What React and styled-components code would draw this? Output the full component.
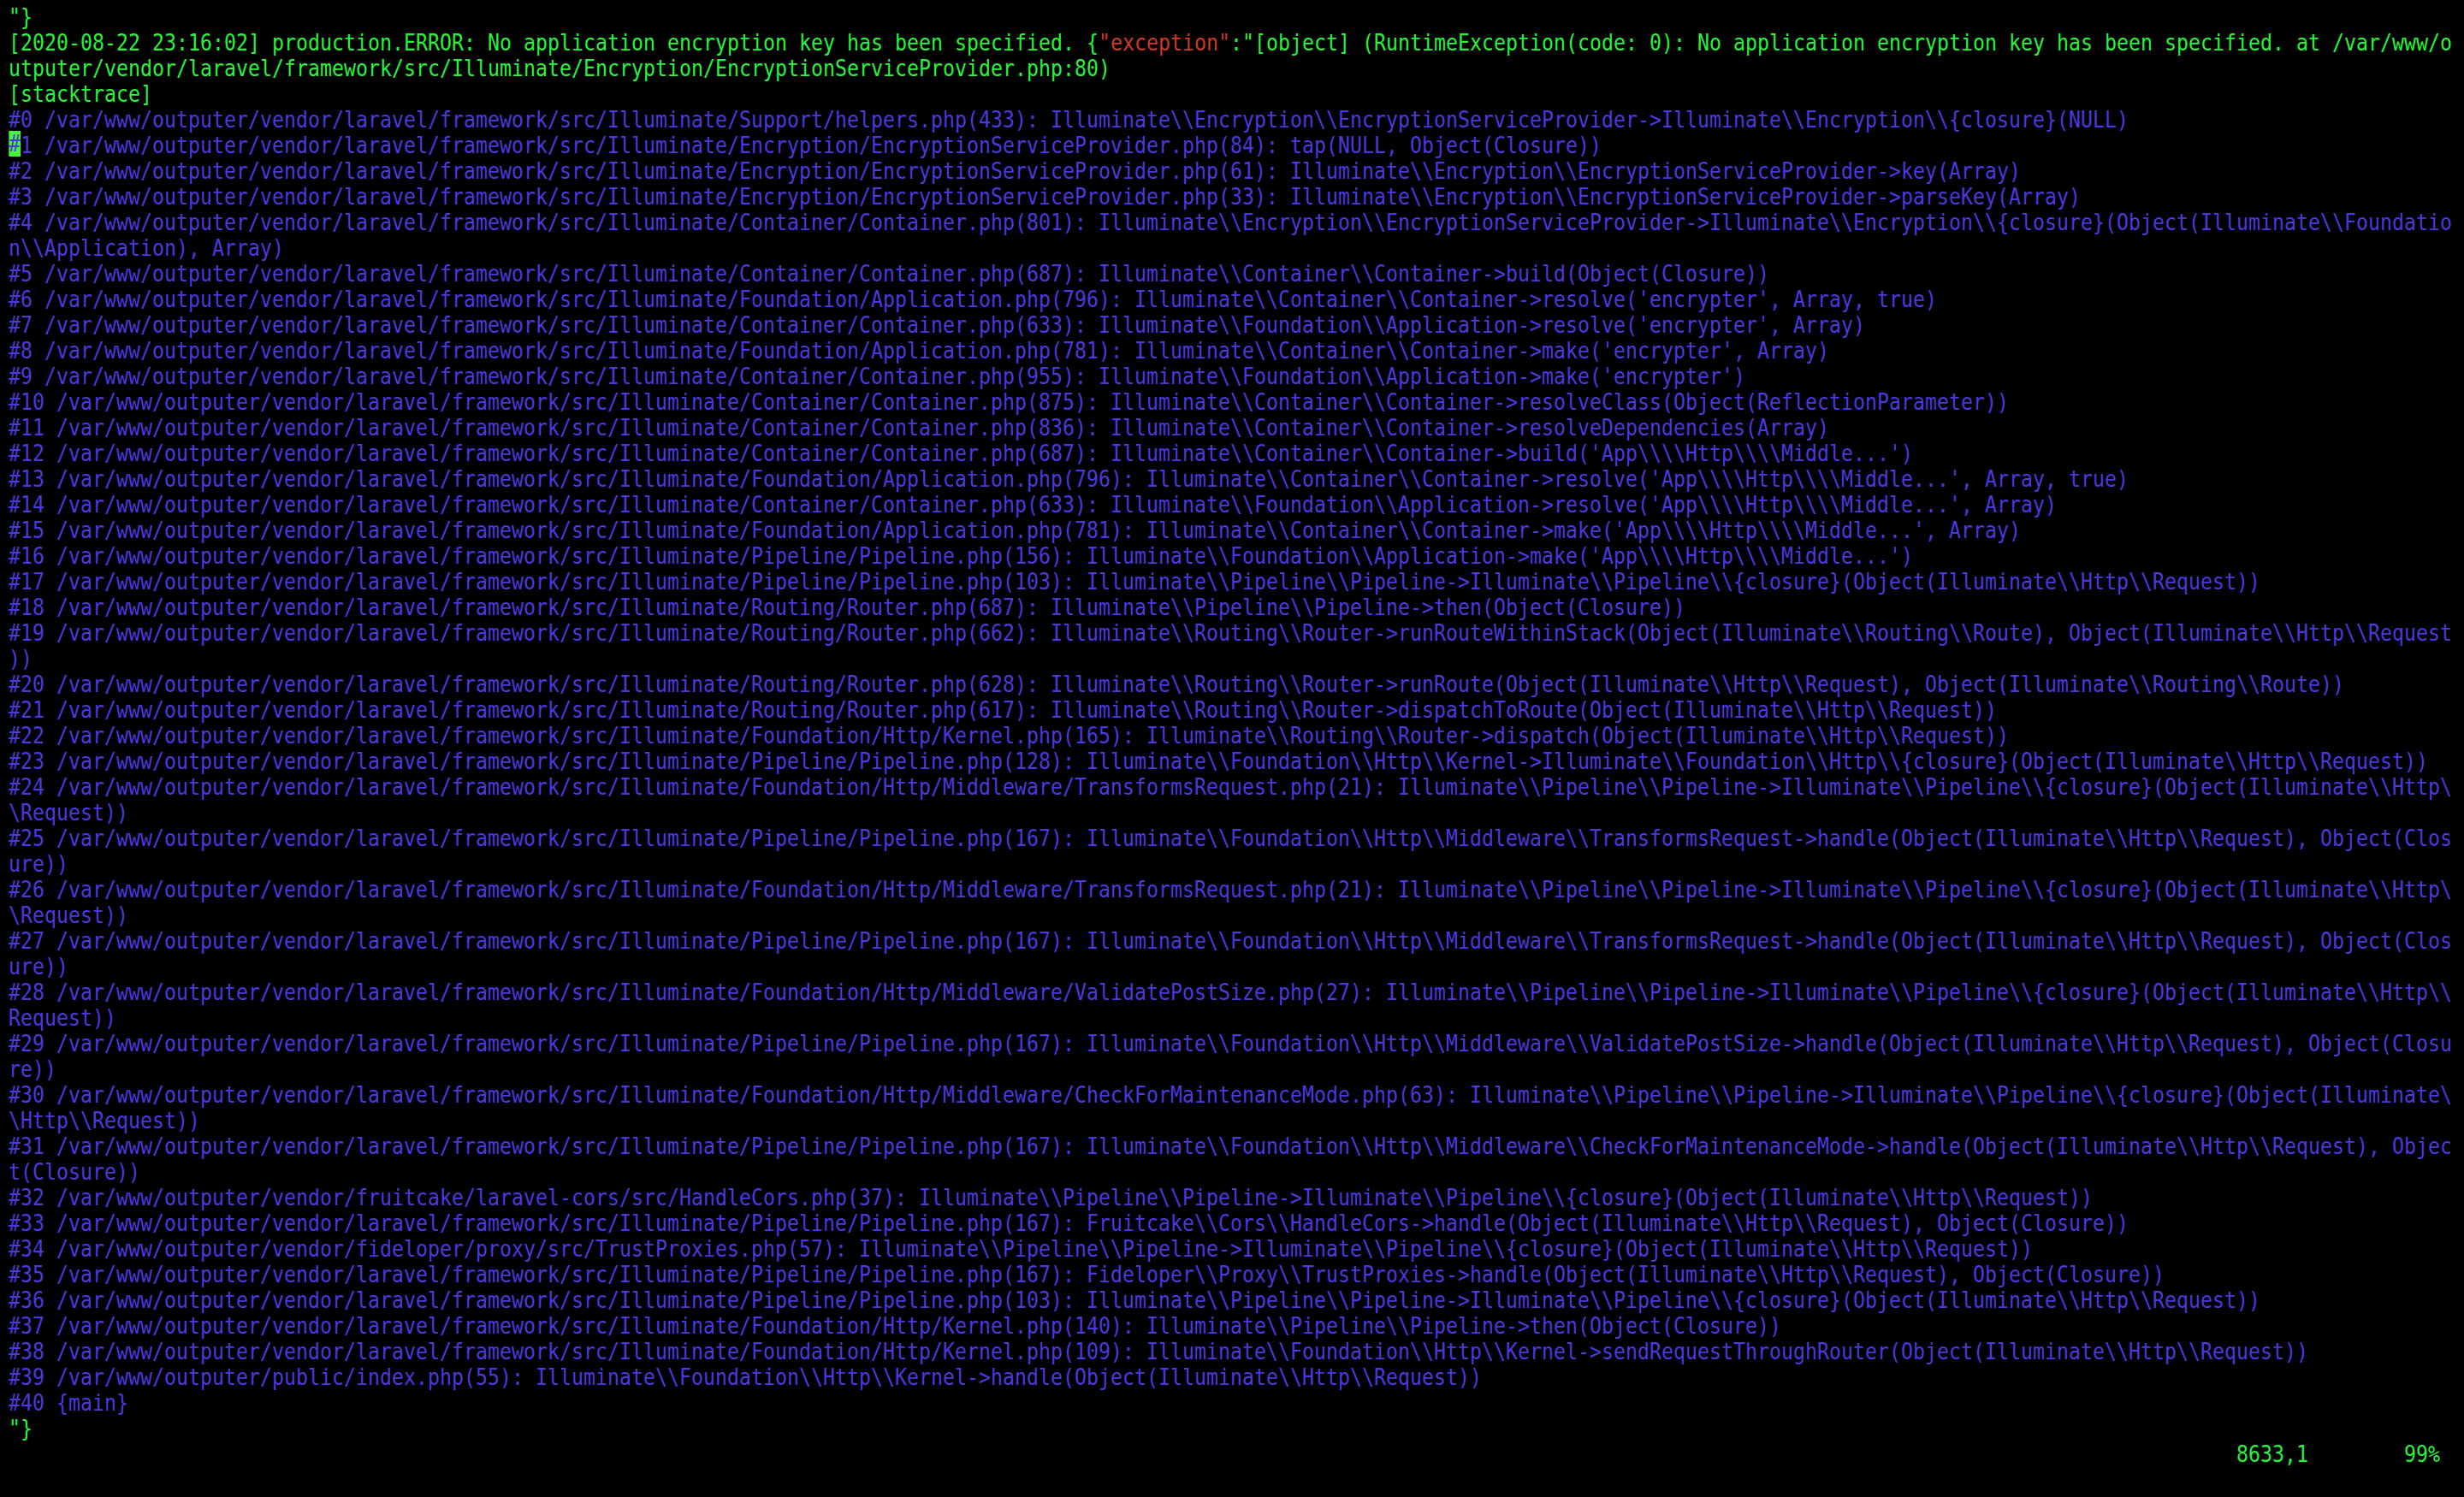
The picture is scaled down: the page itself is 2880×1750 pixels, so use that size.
import styled, { createGlobalStyle } from "styled-components";

// vim window: 204 columns, 30px rows, condensed mono font
const COLS = 204;
const CELL = 14.0;
const FONT_SIZE = 27;
const SQUEEZE = CELL / (FONT_SIZE * 0.60205);

const GlobalStyle = createGlobalStyle`
  html, body {
    margin: 0;
    padding: 0;
    background: #000;
  }
  body {
    width: 2880px;
    height: 1750px;
    overflow: hidden;
  }
`;

const Screen = styled.div`
  width: ${2880 / SQUEEZE}px;
  height: 1750px;
  box-sizing: border-box;
  padding: 5px 0 0 ${10 / SQUEEZE}px;
  display: flex;
  flex-direction: column;
  background: #000;
  font-family: "DejaVu Sans Mono", "Liberation Mono", monospace;
  font-size: ${FONT_SIZE}px;
  line-height: 30px;
  transform: scaleX(${SQUEEZE});
  transform-origin: 0 0;
`;

const Row = styled.div`
  height: 30px;
  white-space: pre;
  flex-shrink: 0;
`;

const tones = {
  green: "#2cf03e",
  blue: "#4c39dc",
  red: "#cc3a29",
};

const Text = styled.span`
  color: ${(p) => tones[p.$tone]};
`;

const Cursor = styled.span`
  display: inline-block;
  height: 30px;
  vertical-align: top;
  margin-top: -2px;
  background: #47f53b;
  color: ${tones.blue};
`;

const StatusLine = styled(Row)`
  color: ${tones.green};
`;

const TRACE = String.raw`#0 /var/www/outputer/vendor/laravel/framework/src/Illuminate/Support/helpers.php(433): Illuminate\\Encryption\\EncryptionServiceProvider->Illuminate\\Encryption\\{closure}(NULL)
#1 /var/www/outputer/vendor/laravel/framework/src/Illuminate/Encryption/EncryptionServiceProvider.php(84): tap(NULL, Object(Closure))
#2 /var/www/outputer/vendor/laravel/framework/src/Illuminate/Encryption/EncryptionServiceProvider.php(61): Illuminate\\Encryption\\EncryptionServiceProvider->key(Array)
#3 /var/www/outputer/vendor/laravel/framework/src/Illuminate/Encryption/EncryptionServiceProvider.php(33): Illuminate\\Encryption\\EncryptionServiceProvider->parseKey(Array)
#4 /var/www/outputer/vendor/laravel/framework/src/Illuminate/Container/Container.php(801): Illuminate\\Encryption\\EncryptionServiceProvider->Illuminate\\Encryption\\{closure}(Object(Illuminate\\Foundation\\Application), Array)
#5 /var/www/outputer/vendor/laravel/framework/src/Illuminate/Container/Container.php(687): Illuminate\\Container\\Container->build(Object(Closure))
#6 /var/www/outputer/vendor/laravel/framework/src/Illuminate/Foundation/Application.php(796): Illuminate\\Container\\Container->resolve('encrypter', Array, true)
#7 /var/www/outputer/vendor/laravel/framework/src/Illuminate/Container/Container.php(633): Illuminate\\Foundation\\Application->resolve('encrypter', Array)
#8 /var/www/outputer/vendor/laravel/framework/src/Illuminate/Foundation/Application.php(781): Illuminate\\Container\\Container->make('encrypter', Array)
#9 /var/www/outputer/vendor/laravel/framework/src/Illuminate/Container/Container.php(955): Illuminate\\Foundation\\Application->make('encrypter')
#10 /var/www/outputer/vendor/laravel/framework/src/Illuminate/Container/Container.php(875): Illuminate\\Container\\Container->resolveClass(Object(ReflectionParameter))
#11 /var/www/outputer/vendor/laravel/framework/src/Illuminate/Container/Container.php(836): Illuminate\\Container\\Container->resolveDependencies(Array)
#12 /var/www/outputer/vendor/laravel/framework/src/Illuminate/Container/Container.php(687): Illuminate\\Container\\Container->build('App\\\\Http\\\\Middle...')
#13 /var/www/outputer/vendor/laravel/framework/src/Illuminate/Foundation/Application.php(796): Illuminate\\Container\\Container->resolve('App\\\\Http\\\\Middle...', Array, true)
#14 /var/www/outputer/vendor/laravel/framework/src/Illuminate/Container/Container.php(633): Illuminate\\Foundation\\Application->resolve('App\\\\Http\\\\Middle...', Array)
#15 /var/www/outputer/vendor/laravel/framework/src/Illuminate/Foundation/Application.php(781): Illuminate\\Container\\Container->make('App\\\\Http\\\\Middle...', Array)
#16 /var/www/outputer/vendor/laravel/framework/src/Illuminate/Pipeline/Pipeline.php(156): Illuminate\\Foundation\\Application->make('App\\\\Http\\\\Middle...')
#17 /var/www/outputer/vendor/laravel/framework/src/Illuminate/Pipeline/Pipeline.php(103): Illuminate\\Pipeline\\Pipeline->Illuminate\\Pipeline\\{closure}(Object(Illuminate\\Http\\Request))
#18 /var/www/outputer/vendor/laravel/framework/src/Illuminate/Routing/Router.php(687): Illuminate\\Pipeline\\Pipeline->then(Object(Closure))
#19 /var/www/outputer/vendor/laravel/framework/src/Illuminate/Routing/Router.php(662): Illuminate\\Routing\\Router->runRouteWithinStack(Object(Illuminate\\Routing\\Route), Object(Illuminate\\Http\\Request))
#20 /var/www/outputer/vendor/laravel/framework/src/Illuminate/Routing/Router.php(628): Illuminate\\Routing\\Router->runRoute(Object(Illuminate\\Http\\Request), Object(Illuminate\\Routing\\Route))
#21 /var/www/outputer/vendor/laravel/framework/src/Illuminate/Routing/Router.php(617): Illuminate\\Routing\\Router->dispatchToRoute(Object(Illuminate\\Http\\Request))
#22 /var/www/outputer/vendor/laravel/framework/src/Illuminate/Foundation/Http/Kernel.php(165): Illuminate\\Routing\\Router->dispatch(Object(Illuminate\\Http\\Request))
#23 /var/www/outputer/vendor/laravel/framework/src/Illuminate/Pipeline/Pipeline.php(128): Illuminate\\Foundation\\Http\\Kernel->Illuminate\\Foundation\\Http\\{closure}(Object(Illuminate\\Http\\Request))
#24 /var/www/outputer/vendor/laravel/framework/src/Illuminate/Foundation/Http/Middleware/TransformsRequest.php(21): Illuminate\\Pipeline\\Pipeline->Illuminate\\Pipeline\\{closure}(Object(Illuminate\\Http\\Request))
#25 /var/www/outputer/vendor/laravel/framework/src/Illuminate/Pipeline/Pipeline.php(167): Illuminate\\Foundation\\Http\\Middleware\\TransformsRequest->handle(Object(Illuminate\\Http\\Request), Object(Closure))
#26 /var/www/outputer/vendor/laravel/framework/src/Illuminate/Foundation/Http/Middleware/TransformsRequest.php(21): Illuminate\\Pipeline\\Pipeline->Illuminate\\Pipeline\\{closure}(Object(Illuminate\\Http\\Request))
#27 /var/www/outputer/vendor/laravel/framework/src/Illuminate/Pipeline/Pipeline.php(167): Illuminate\\Foundation\\Http\\Middleware\\TransformsRequest->handle(Object(Illuminate\\Http\\Request), Object(Closure))
#28 /var/www/outputer/vendor/laravel/framework/src/Illuminate/Foundation/Http/Middleware/ValidatePostSize.php(27): Illuminate\\Pipeline\\Pipeline->Illuminate\\Pipeline\\{closure}(Object(Illuminate\\Http\\Request))
#29 /var/www/outputer/vendor/laravel/framework/src/Illuminate/Pipeline/Pipeline.php(167): Illuminate\\Foundation\\Http\\Middleware\\ValidatePostSize->handle(Object(Illuminate\\Http\\Request), Object(Closure))
#30 /var/www/outputer/vendor/laravel/framework/src/Illuminate/Foundation/Http/Middleware/CheckForMaintenanceMode.php(63): Illuminate\\Pipeline\\Pipeline->Illuminate\\Pipeline\\{closure}(Object(Illuminate\\Http\\Request))
#31 /var/www/outputer/vendor/laravel/framework/src/Illuminate/Pipeline/Pipeline.php(167): Illuminate\\Foundation\\Http\\Middleware\\CheckForMaintenanceMode->handle(Object(Illuminate\\Http\\Request), Object(Closure))
#32 /var/www/outputer/vendor/fruitcake/laravel-cors/src/HandleCors.php(37): Illuminate\\Pipeline\\Pipeline->Illuminate\\Pipeline\\{closure}(Object(Illuminate\\Http\\Request))
#33 /var/www/outputer/vendor/laravel/framework/src/Illuminate/Pipeline/Pipeline.php(167): Fruitcake\\Cors\\HandleCors->handle(Object(Illuminate\\Http\\Request), Object(Closure))
#34 /var/www/outputer/vendor/fideloper/proxy/src/TrustProxies.php(57): Illuminate\\Pipeline\\Pipeline->Illuminate\\Pipeline\\{closure}(Object(Illuminate\\Http\\Request))
#35 /var/www/outputer/vendor/laravel/framework/src/Illuminate/Pipeline/Pipeline.php(167): Fideloper\\Proxy\\TrustProxies->handle(Object(Illuminate\\Http\\Request), Object(Closure))
#36 /var/www/outputer/vendor/laravel/framework/src/Illuminate/Pipeline/Pipeline.php(103): Illuminate\\Pipeline\\Pipeline->Illuminate\\Pipeline\\{closure}(Object(Illuminate\\Http\\Request))
#37 /var/www/outputer/vendor/laravel/framework/src/Illuminate/Foundation/Http/Kernel.php(140): Illuminate\\Pipeline\\Pipeline->then(Object(Closure))
#38 /var/www/outputer/vendor/laravel/framework/src/Illuminate/Foundation/Http/Kernel.php(109): Illuminate\\Foundation\\Http\\Kernel->sendRequestThroughRouter(Object(Illuminate\\Http\\Request))
#39 /var/www/outputer/public/index.php(55): Illuminate\\Foundation\\Http\\Kernel->handle(Object(Illuminate\\Http\\Request))
#40 {main}`.split("\n");

const LINES = [
  [{ tone: "green", text: '"}' }],
  [
    {
      tone: "green",
      text: "[2020-08-22 23:16:02] production.ERROR: No application encryption key has been specified. {",
    },
    { tone: "red", text: '"exception"' },
    {
      tone: "green",
      text: ':"[object] (RuntimeException(code: 0): No application encryption key has been specified. at /var/www/outputer/vendor/laravel/framework/src/Illuminate/Encryption/EncryptionServiceProvider.php:80)',
    },
  ],
  [{ tone: "green", text: "[stacktrace]" }],
  ...TRACE.map((frame, i) =>
    i === 1
      ? [
          { tone: "cursor", text: frame.slice(0, 1) },
          { tone: "blue", text: frame.slice(1) },
        ]
      : [{ tone: "blue", text: frame }]
  ),
  [{ tone: "green", text: '"}' }],
];

// break a logical line into screen rows the way vim wraps it
function wrapLine(segments) {
  const rows = [[]];
  let used = 0;
  for (const seg of segments) {
    let text = seg.text;
    while (text.length) {
      if (used === COLS) {
        rows.push([]);
        used = 0;
      }
      const part = text.slice(0, COLS - used);
      rows[rows.length - 1].push({ ...seg, text: part });
      used += part.length;
      text = text.slice(part.length);
    }
  }
  return rows;
}

const ROWS = LINES.flatMap(wrapLine);

export default function App() {
  return (
    <>
      <GlobalStyle />
      <Screen>
        {ROWS.map((row, r) => (
          <Row key={r}>
            {row.map((seg, s) =>
              seg.tone === "cursor" ? (
                <Cursor key={s}>{seg.text}</Cursor>
              ) : (
                <Text key={s} $tone={seg.tone}>
                  {seg.text}
                </Text>
              )
            )}
          </Row>
        ))}
        <StatusLine>{" ".repeat(186) + "8633,1" + " ".repeat(8) + "99%"}</StatusLine>
      </Screen>
    </>
  );
}
